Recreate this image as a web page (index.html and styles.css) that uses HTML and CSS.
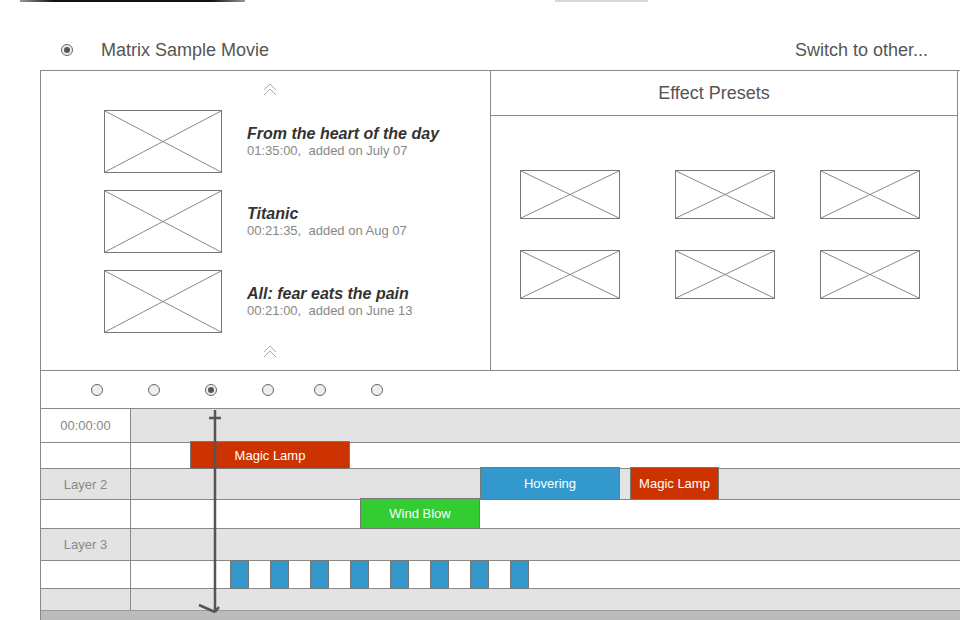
FILE: index.html
```html
<!DOCTYPE html>
<html lang="en">
  <head>
    <meta charset="UTF-8" />
    <meta name="viewport" content="width=device-width, initial-scale=1.0" />
    <link rel="stylesheet" href="styles.css">
    <title>Matrix Sample Movie</title>
  </head>
  <body>
    <div class="topedge">
      <span class="seg dark"></span>
      <span class="seg light"></span>
    </div>

    <header class="bar">
      <span class="radio on"></span>
      <span class="movie-name">Matrix Sample Movie</span>
      <span class="switch">Switch to other...</span>
    </header>

    <main class="frame">
      <section class="panels">
        <div class="movies">
          <svg class="chev" viewBox="0 0 14 12"><path d="M1 7L7 1L13 7M1 12L7 6L13 12" /></svg>
          <ul class="movie-list">
            <li class="movie">
              <svg class="thumb" viewBox="0 0 100 100" preserveAspectRatio="none"><path d="M0 0L100 100M0 100L100 0" /></svg>
              <div class="meta">
                <h3>From the heart of the day</h3>
                <p>01:35:00,&nbsp; added on July 07</p>
              </div>
            </li>
            <li class="movie">
              <svg class="thumb" viewBox="0 0 100 100" preserveAspectRatio="none"><path d="M0 0L100 100M0 100L100 0" /></svg>
              <div class="meta">
                <h3>Titanic</h3>
                <p>00:21:35,&nbsp; added on Aug 07</p>
              </div>
            </li>
            <li class="movie">
              <svg class="thumb" viewBox="0 0 100 100" preserveAspectRatio="none"><path d="M0 0L100 100M0 100L100 0" /></svg>
              <div class="meta">
                <h3>All: fear eats the pain</h3>
                <p>00:21:00,&nbsp; added on June 13</p>
              </div>
            </li>
          </ul>
          <svg class="chev" viewBox="0 0 14 12"><path d="M1 7L7 1L13 7M1 12L7 6L13 12" /></svg>
        </div>

        <div class="presets">
          <h2>Effect Presets</h2>
          <div class="preset-grid">
            <svg class="thumb" viewBox="0 0 100 100" preserveAspectRatio="none"><path d="M0 0L100 100M0 100L100 0" /></svg>
            <svg class="thumb" viewBox="0 0 100 100" preserveAspectRatio="none"><path d="M0 0L100 100M0 100L100 0" /></svg>
            <svg class="thumb" viewBox="0 0 100 100" preserveAspectRatio="none"><path d="M0 0L100 100M0 100L100 0" /></svg>
            <svg class="thumb" viewBox="0 0 100 100" preserveAspectRatio="none"><path d="M0 0L100 100M0 100L100 0" /></svg>
            <svg class="thumb" viewBox="0 0 100 100" preserveAspectRatio="none"><path d="M0 0L100 100M0 100L100 0" /></svg>
            <svg class="thumb" viewBox="0 0 100 100" preserveAspectRatio="none"><path d="M0 0L100 100M0 100L100 0" /></svg>
          </div>
        </div>
      </section>

      <div class="dots">
        <span class="radio"></span>
        <span class="radio"></span>
        <span class="radio on"></span>
        <span class="radio"></span>
        <span class="radio"></span>
        <span class="radio"></span>
      </div>

      <div class="timeline">
        <div class="row r1 head">
          <div class="label">00:00:00</div>
          <div class="track"></div>
        </div>
        <div class="row r2">
          <div class="label"></div>
          <div class="track">
            <span class="clip red" style="left: 59px; width: 160px">Magic Lamp</span>
          </div>
        </div>
        <div class="row r3 gray">
          <div class="label">Layer 2</div>
          <div class="track">
            <span class="clip blue" style="left: 349px; width: 140px">Hovering</span>
            <span class="clip red" style="left: 499px; width: 89px">Magic Lamp</span>
          </div>
        </div>
        <div class="row r4">
          <div class="label"></div>
          <div class="track">
            <span class="clip green" style="left: 229px; width: 120px">Wind Blow</span>
          </div>
        </div>
        <div class="row r5 gray">
          <div class="label">Layer 3</div>
          <div class="track"></div>
        </div>
        <div class="row r6">
          <div class="label"></div>
          <div class="track">
            <span class="clip blue key" style="left: 99px"></span>
            <span class="clip blue key" style="left: 139px"></span>
            <span class="clip blue key" style="left: 179px"></span>
            <span class="clip blue key" style="left: 219px"></span>
            <span class="clip blue key" style="left: 259px"></span>
            <span class="clip blue key" style="left: 299px"></span>
            <span class="clip blue key" style="left: 339px"></span>
            <span class="clip blue key" style="left: 379px"></span>
          </div>
        </div>
        <div class="row r7 gray">
          <div class="label"></div>
          <div class="track"></div>
        </div>

        <!-- playhead -->
        <svg class="playhead" viewBox="0 0 24 206">
          <path d="M17 2V204M11 10H23M1 197L17 204M17 204L21 199" />
        </svg>
      </div>

      <div class="scrollbar"></div>
    </main>
  </body>
</html>
```

FILE: styles.css
```css
* {
  margin: 0;
  padding: 0;
  box-sizing: border-box;
}

body {
  width: 960px;
  height: 620px;
  overflow: hidden;
  background: #fff;
  font-family: "Liberation Sans", Arial, sans-serif;
  color: #555;
}

.topedge {
  display: flex;
  height: 2px;
}

.seg.dark {
  margin-left: 20px;
  width: 225px;
  background: linear-gradient(90deg, #999, #111 15%, #111 85%, #999);
}

.seg.light {
  margin-left: 310px;
  width: 93px;
  background: #d8d8d8;
}

/* top bar */
.bar {
  display: flex;
  align-items: center;
  height: 68px;
  padding: 28px 32px 0 61px;
  font-size: 18px;
}

.movie-name {
  margin-left: 28px;
}

.switch {
  margin-left: auto;
}

.radio {
  position: relative;
  display: inline-block;
  width: 12px;
  height: 12px;
  border: 1px solid #666;
  border-radius: 50%;
  background: #eee;
}

.radio.on::after {
  content: "";
  position: absolute;
  top: 2px;
  left: 2px;
  width: 6px;
  height: 6px;
  border-radius: 50%;
  background: #555;
}

/* main frame */
.frame {
  margin-left: 40px;
  width: 920px;
  height: 550px;
  border-left: 1px solid #888;
  border-top: 1px solid #888;
}

.panels {
  display: grid;
  grid-template-columns: 450px 1fr;
  height: 300px;
  border-bottom: 1px solid #888;
}

.movies {
  border-right: 1px solid #888;
  padding-top: 12px;
}

.chev {
  display: block;
  width: 14px;
  height: 12px;
  margin-left: 222px;
  fill: none;
  stroke: #aaa;
  stroke-width: 1;
}

.movie-list {
  list-style: none;
  display: flex;
  flex-direction: column;
  gap: 17px;
  margin: 15px 0 12px;
  padding-left: 63px;
}

.movie {
  display: flex;
  align-items: center;
  gap: 25px;
}

.thumb {
  display: block;
  flex: none;
  border: 1px solid #777;
  background: #fff;
}

.thumb path {
  fill: none;
  stroke: #888;
  stroke-width: 1;
  vector-effect: non-scaling-stroke;
}

.movie .thumb {
  width: 118px;
  height: 63px;
}

.meta h3 {
  font-size: 16px;
  font-weight: bold;
  font-style: italic;
  color: #333;
  line-height: 19px;
}

.meta p {
  font-size: 13px;
  color: #888;
  line-height: 16px;
}

.presets {
  border-right: 1px solid #888;
  margin-right: 2px;
}

.presets h2 {
  height: 45px;
  padding-right: 20px;
  border-bottom: 1px solid #888;
  font-size: 18px;
  font-weight: normal;
  text-align: center;
  line-height: 44px;
}

.preset-grid {
  display: grid;
  grid-template-columns: 155px 145px 100px;
  grid-auto-rows: 49px;
  row-gap: 31px;
  padding: 54px 0 0 29px;
}

.preset-grid .thumb {
  width: 100px;
  height: 49px;
}

/* radio strip */
.dots {
  display: flex;
  align-items: center;
  gap: 45px;
  height: 37px;
  padding-left: 50px;
}

.dots .radio:nth-child(5) {
  margin-left: -5px;
}

/* timeline */
.timeline {
  position: relative;
}

.row {
  display: grid;
  grid-template-columns: 90px 1fr;
  border-top: 1px solid #888;
}

.r1 { height: 34px; }
.r2 { height: 26px; }
.r3 { height: 31px; }
.r4 { height: 29px; }
.r5 { height: 32px; }
.r6 { height: 28px; }
.r7 { height: 22px; }

.label {
  display: flex;
  align-items: center;
  justify-content: center;
  border-right: 1px solid #888;
  font-size: 13px;
  color: #888;
}

.track {
  position: relative;
}

.head .track,
.gray .label,
.gray .track {
  background: #e3e3e3;
}

.clip {
  position: absolute;
  top: -2px;
  bottom: -1px;
  display: flex;
  align-items: center;
  justify-content: center;
  border: 1px solid #777;
  color: #fff;
  font-size: 13px;
}

.clip.red {
  background: #cc3300;
}

.clip.blue {
  background: #3399cc;
}

.clip.green {
  background: #33cc33;
}

.clip.key {
  width: 19px;
  top: -1px;
}

.playhead {
  position: absolute;
  top: 0;
  left: 157px;
  width: 24px;
  height: 206px;
  fill: none;
  stroke: #555;
  stroke-width: 2.5;
  z-index: 2;
}

.scrollbar {
  height: 10px;
  border-top: 1px solid #999;
  background: #bbb;
}
```
